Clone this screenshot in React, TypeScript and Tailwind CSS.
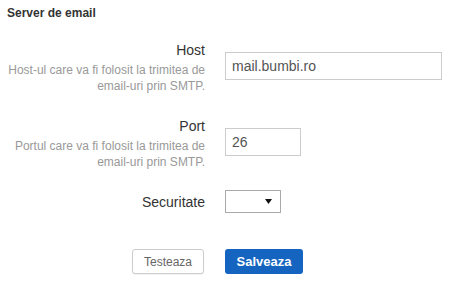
import React from "react";

interface FieldRowProps {
  label: string;
  hint: string;
  children: React.ReactNode;
}

function FieldRow({ label, hint, children }: FieldRowProps) {
  return (
    <div className="flex items-start">
      <div className="w-[205px] text-right">
        <div className="text-[14px] leading-5 text-[#333]">{label}</div>
        <div className="mt-[2px] pl-[8px] text-[12px] leading-4 text-[#999]">{hint}</div>
      </div>
      <div className="ml-[20px] mt-[12px]">{children}</div>
    </div>
  );
}

export default function App() {
  return (
    <div
      className="min-h-[283px] w-[449px] bg-white"
      style={{ fontFamily: '"Liberation Sans", Arial, sans-serif' }}
    >
      <h3 className="pl-[7px] pt-[5px] text-[12px] font-bold leading-4 text-[#333]">
        Server de email
      </h3>

      <div className="mt-[19px]">
        <FieldRow
          label="Host"
          hint="Host-ul care va fi folosit la trimitea de email-uri prin SMTP."
        >
          <input
            type="text"
            defaultValue="mail.bumbi.ro"
            className="h-[28px] w-[217px] border border-[#ccc] bg-white px-[6px] text-[14px] text-[#555] outline-none"
          />
        </FieldRow>

        <div className="mt-[22px]">
          <FieldRow
            label="Port"
            hint="Portul care va fi folosit la trimitea de email-uri prin SMTP."
          >
            <input
              type="text"
              defaultValue="26"
              className="h-[28px] w-[76px] border border-[#ccc] bg-white px-[6px] text-[14px] text-[#555] outline-none"
            />
          </FieldRow>
        </div>

        <div className="mt-[20px] flex items-center">
          <div className="w-[205px] text-right text-[14px] leading-5 text-[#333]">
            Securitate
          </div>
          <div className="ml-[20px] flex h-[23px] w-[56px] items-center justify-end border border-[#aaa] bg-white pr-[8px]">
            <svg width="7" height="5" viewBox="0 0 7 5">
              <path d="M0 0 H7 L3.5 5 Z" fill="#111" />
            </svg>
          </div>
        </div>

        <div className="mt-[36px] flex items-center">
          <div className="flex w-[205px] justify-end pr-[1px]">
            <button className="h-[25px] w-[72px] rounded-[3px] border border-[#ccc] bg-white text-[12px] text-[#666] shadow-[0_1px_1px_rgba(0,0,0,0.05)]">
              Testeaza
            </button>
          </div>
          <button className="ml-[20px] h-[25px] w-[78px] rounded-[3px] bg-[#1565c0] text-[13px] font-bold text-white">
            Salveaza
          </button>
        </div>
      </div>
    </div>
  );
}
